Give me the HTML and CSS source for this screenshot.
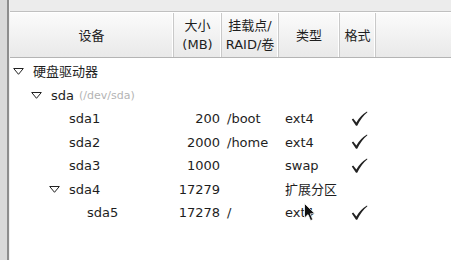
FILE: index.html
```html
<!DOCTYPE html>
<html lang="zh-CN">
<head>
    <meta charset="UTF-8">
    <meta name="viewport" content="width=device-width, initial-scale=1.0">
    <title>分区</title>
    <link rel="stylesheet" href="styles.css">
</head>
<body>
    <div class="frame">
        <div class="topband"></div>
        <div class="tree">
            <div class="row head">
                <div class="hcell">设备</div>
                <div class="hcell">大小<br>(MB)</div>
                <div class="hcell">挂载点/<br>RAID/卷</div>
                <div class="hcell">类型</div>
                <div class="hcell">格式</div>
                <div class="hcell last"></div>
            </div>

            <div class="row">
                <div class="cell name lv0"><span class="exp"><svg width="11" height="7" viewBox="0 0 11 7"><path d="M0.7 0.5 H10.3 L5.5 6.3 Z" fill="none" stroke="#222" stroke-width="1"/></svg></span>硬盘驱动器</div>
                <div class="cell size"></div>
                <div class="cell mount"></div>
                <div class="cell type"></div>
                <div class="cell fmt"></div>
                <div class="cell"></div>
            </div>
            <div class="row">
                <div class="cell name lv1"><span class="exp"><svg width="11" height="7" viewBox="0 0 11 7"><path d="M0.7 0.5 H10.3 L5.5 6.3 Z" fill="none" stroke="#222" stroke-width="1"/></svg></span>sda <span class="dim">(/dev/sda)</span></div>
                <div class="cell size"></div>
                <div class="cell mount"></div>
                <div class="cell type"></div>
                <div class="cell fmt"></div>
                <div class="cell"></div>
            </div>
            <div class="row">
                <div class="cell name lv2"><span class="exp"></span>sda1</div>
                <div class="cell size">200</div>
                <div class="cell mount">/boot</div>
                <div class="cell type">ext4</div>
                <div class="cell fmt"><svg class="check" width="17" height="16" viewBox="0 0 17 16"><path d="M0.8 8.6 L2.2 7.6 L5.4 11.4 Q9.4 4.6 16 0.6 L16.4 1.3 Q10.6 6 6.2 14.8 L5 14.8 Z" fill="#222"/></svg></div>
                <div class="cell"></div>
            </div>
            <div class="row">
                <div class="cell name lv2"><span class="exp"></span>sda2</div>
                <div class="cell size">2000</div>
                <div class="cell mount">/home</div>
                <div class="cell type">ext4</div>
                <div class="cell fmt"><svg class="check" width="17" height="16" viewBox="0 0 17 16"><path d="M0.8 8.6 L2.2 7.6 L5.4 11.4 Q9.4 4.6 16 0.6 L16.4 1.3 Q10.6 6 6.2 14.8 L5 14.8 Z" fill="#222"/></svg></div>
                <div class="cell"></div>
            </div>
            <div class="row">
                <div class="cell name lv2"><span class="exp"></span>sda3</div>
                <div class="cell size">1000</div>
                <div class="cell mount"></div>
                <div class="cell type">swap</div>
                <div class="cell fmt"><svg class="check" width="17" height="16" viewBox="0 0 17 16"><path d="M0.8 8.6 L2.2 7.6 L5.4 11.4 Q9.4 4.6 16 0.6 L16.4 1.3 Q10.6 6 6.2 14.8 L5 14.8 Z" fill="#222"/></svg></div>
                <div class="cell"></div>
            </div>
            <div class="row">
                <div class="cell name lv1b"><span class="exp"><svg width="11" height="7" viewBox="0 0 11 7"><path d="M0.7 0.5 H10.3 L5.5 6.3 Z" fill="none" stroke="#222" stroke-width="1"/></svg></span>sda4</div>
                <div class="cell size">17279</div>
                <div class="cell mount"></div>
                <div class="cell type">扩展分区</div>
                <div class="cell fmt"></div>
                <div class="cell"></div>
            </div>
            <div class="row">
                <div class="cell name lv3"><span class="exp"></span>sda5</div>
                <div class="cell size">17278</div>
                <div class="cell mount">/</div>
                <div class="cell type">ext4</div>
                <div class="cell fmt"><svg class="check" width="17" height="16" viewBox="0 0 17 16"><path d="M0.8 8.6 L2.2 7.6 L5.4 11.4 Q9.4 4.6 16 0.6 L16.4 1.3 Q10.6 6 6.2 14.8 L5 14.8 Z" fill="#222"/></svg></div>
                <div class="cell"></div>
            </div>
        </div>

        <svg class="cursor" width="13" height="19" viewBox="0 0 13 19">
            <path d="M0.5 0.5 L0.5 15 L4 11.6 L6.6 17.6 L8.8 16.6 L6.3 10.8 L11 10.8 Z" fill="#111" stroke="#fff" stroke-width="0.8"/>
        </svg>
    </div>
</body>
</html>
```

FILE: styles.css
```css
body {
    margin: 0;
    background-color: #dadada;
    font-family: "DejaVu Sans", "Noto Sans CJK SC", sans-serif;
    font-size: 13px;
    color: #1e1e1e;
    height: 260px;
    overflow: hidden;
}

.frame {
    position: relative;
    margin-left: 7px;
    height: 260px;
    border-left: 2px solid #8e8e8e;
    padding-left: 1px;
    background-color: #f2f2f2;
}

.topband {
    height: 11px;
    background-color: #ececec;
    border-bottom: 1px solid #c0c0c0;
}

.tree {
    background-color: #fff;
    height: 248px;
}

.row {
    display: grid;
    grid-template-columns: 164px 48px 57px 61px 36px 1fr;
    height: 23.5px;
    line-height: 23.5px;
}

.row.head {
    height: 46px;
    line-height: 19px;
    background: linear-gradient(#fbfbfb, #e9e9e9);
    border-top: 1px solid #fff;
    border-bottom: 1px solid #b4b4b4;
    box-sizing: border-box;
    margin-bottom: 2px;
}

.hcell {
    display: flex;
    align-items: center;
    justify-content: center;
    text-align: center;
    border-right: 1px solid #c9c9c9;
    box-shadow: inset -1px 0 #fff;
}

.hcell.last {
    border-right: none;
    box-shadow: none;
}

.cell {
    white-space: nowrap;
}

.name {
    display: flex;
    align-items: center;
}

.exp {
    display: inline-flex;
    width: 20px;
    flex-shrink: 0;
}

.lv0 { padding-left: 3px; }
.lv1 { padding-left: 21px; }
.lv1b { padding-left: 39px; }
.lv2 { padding-left: 39px; }
.lv3 { padding-left: 57px; }

.dim {
    font-size: 11px;
    color: #b4b4b4;
    margin-left: 5px;
}

.size {
    text-align: right;
    padding-right: 2px;
}

.mount {
    padding-left: 5px;
}

.type {
    padding-left: 6px;
}

.fmt {
    display: flex;
    align-items: center;
    padding-left: 11px;
}

.cursor {
    position: absolute;
    left: 295px;
    top: 203px;
}
```
